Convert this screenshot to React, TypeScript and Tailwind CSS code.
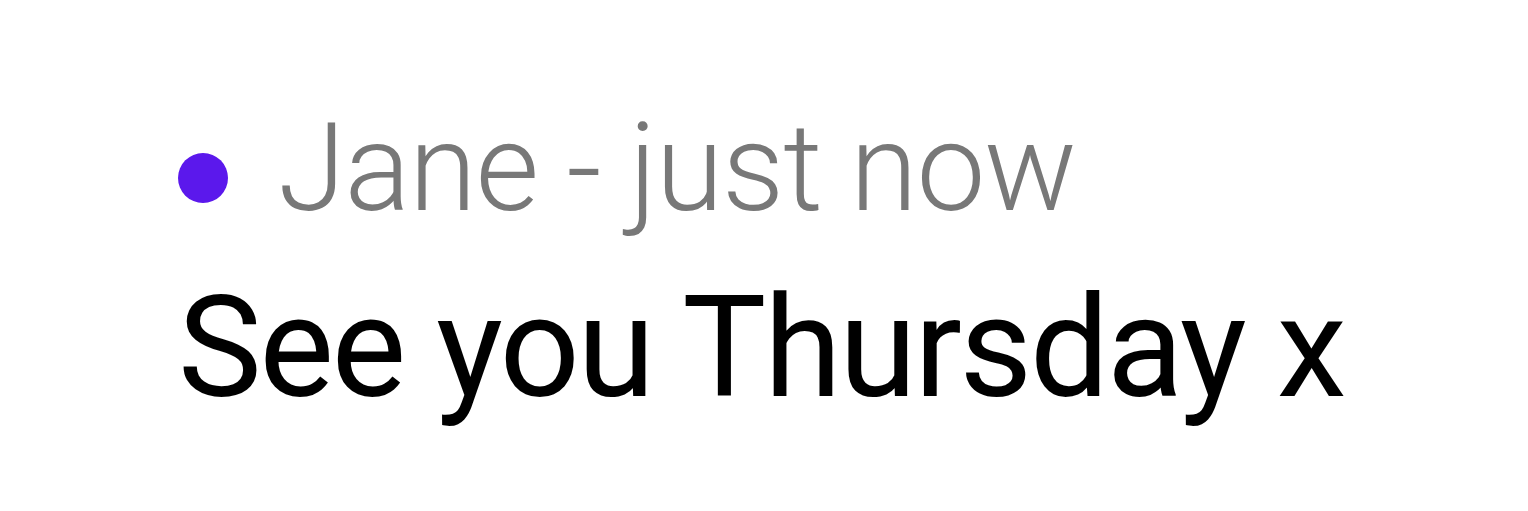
export default function App() {
  return (
    <main className="min-h-screen bg-white pl-[178px] pt-[108px]">
      <div className="flex items-start gap-[50px]">
        <span className="mt-[45px] h-[50px] w-[50px] shrink-0 rounded-full bg-[#5b18ec]" />
        <p className="whitespace-nowrap font-['Roboto',sans-serif] text-[123px] font-light leading-[120px] tracking-[-1.3px] text-[#787878]">
          Jane - just now
        </p>
      </div>
      <p className="mt-[50px] whitespace-nowrap font-['Roboto',sans-serif] text-[141px] leading-[140px] tracking-[-2.5px] text-black">
        See you Thursday x
      </p>
    </main>
  );
}
